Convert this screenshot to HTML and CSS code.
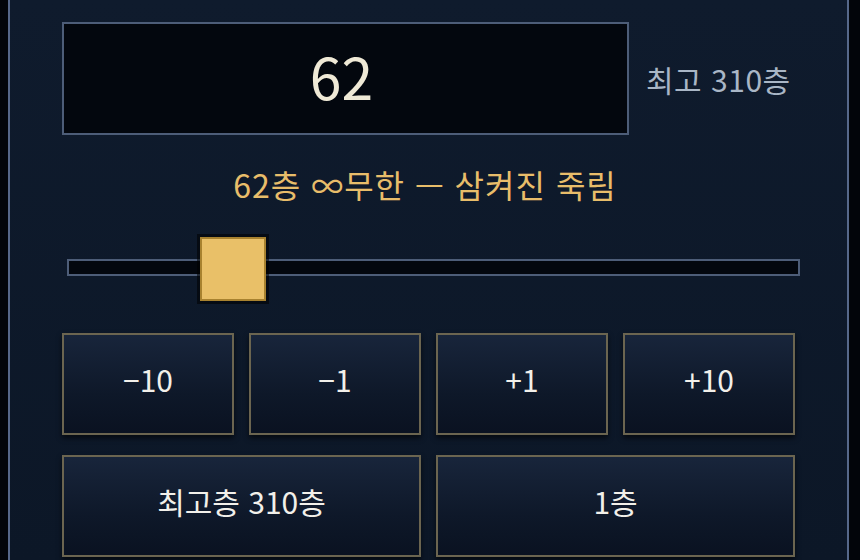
FILE: index.html
```html
<!DOCTYPE html>
<html lang="ko">
<head>
<meta charset="utf-8">
<title>층 선택</title>
<link rel="stylesheet" href="styles.css">
</head>
<body>
<div class="panel">
  <div class="top-row">
    <div class="display">62</div>
    <div class="max-label">최고 310층</div>
  </div>
  <div class="floor-name">62층 ∞무한 — 삼켜진 죽림</div>
  <div class="slider">
    <div class="track"></div>
    <div class="thumb" style="left: 133px;"></div>
  </div>
  <div class="grid4">
    <button class="btn">−10</button>
    <button class="btn">−1</button>
    <button class="btn">+1</button>
    <button class="btn">+10</button>
  </div>
  <div class="grid2">
    <button class="btn">최고층 310층</button>
    <button class="btn">1층</button>
  </div>
</div>
</body>
</html>
```

FILE: styles.css
```css
html, body {
  margin: 0;
  padding: 0;
  height: 560px;
  overflow: hidden;
  background: #02050a;
  font-family: "Noto Sans CJK KR", "Noto Sans", sans-serif;
}

.panel {
  box-sizing: border-box;
  margin-left: 8px;
  width: 841px;
  height: 560px;
  border-left: 2px solid #56688a;
  border-right: 2px solid #56688a;
  background: linear-gradient(180deg, #0f1b2d 0%, #0c1727 100%);
  padding: 22px 51px 0 52px;
}

.top-row {
  display: flex;
  align-items: center;
  gap: 17px;
  height: 113px;
}

.display {
  box-sizing: border-box;
  width: 567px;
  height: 113px;
  border: 2px solid #4d5d78;
  background: #03070e;
  color: #efe9d6;
  font-size: 57px;
  line-height: 1;
  display: flex;
  align-items: center;
  justify-content: center;
  padding-right: 8px;
  padding-bottom: 6px;
}

.max-label {
  color: #a9b6c6;
  font-size: 30px;
  line-height: 1;
  letter-spacing: 0.5px;
}

.floor-name {
  margin-top: 30px;
  height: 40px;
  line-height: 38px;
  text-align: center;
  color: #e8bd6a;
  font-size: 32px;
  padding-right: 8px;
  letter-spacing: 1px;
}

.slider {
  position: relative;
  margin: 32px -4px 0 5px;
  height: 64px;
  display: flex;
  align-items: center;
}

.track {
  box-sizing: border-box;
  width: 100%;
  height: 17px;
  margin-top: -3px;
  border: 2px solid #4d5d78;
  background: #03070e;
}

.thumb {
  position: absolute;
  top: 0;
  box-sizing: border-box;
  width: 66px;
  height: 64px;
  background: #e9c068;
  border: 2px solid #a8822f;
  box-shadow: 0 0 0 3px rgba(0, 0, 0, 0.55);
}

.grid4 {
  margin-top: 32px;
  display: grid;
  grid-template-columns: repeat(4, 172px);
  column-gap: 15px;
}

.grid2 {
  margin-top: 20px;
  display: grid;
  grid-template-columns: repeat(2, 359px);
  column-gap: 15px;
}

.btn {
  box-sizing: border-box;
  height: 102px;
  border: 2px solid #6b6550;
  background: linear-gradient(180deg, #18253b 0%, #0e1829 60%, #0a1221 100%);
  box-shadow: 0 3px 5px rgba(0, 0, 0, 0.6);
  color: #f2f0ea;
  font-family: "Noto Sans CJK KR", "Noto Sans", sans-serif;
  font-size: 30px;
  line-height: 1;
  padding: 0 0 10px 0;
  margin: 0;
  cursor: pointer;
}
```
